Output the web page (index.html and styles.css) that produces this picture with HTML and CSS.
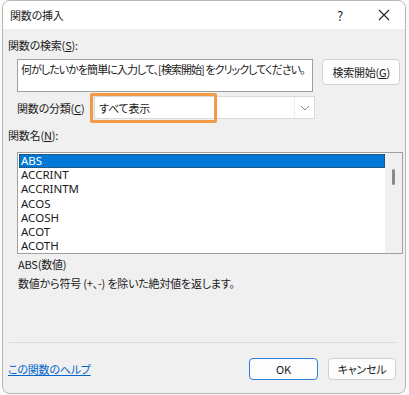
FILE: index.html
```html
<!DOCTYPE html>
<html lang="ja">
<head>
<meta charset="utf-8">
<link rel="stylesheet" href="styles.css">
</head>
<body>
<div class="window">
  <div class="titlebar">
    <span class="title">関数の挿入</span>
    <span class="help">?</span>
    <span class="close"><svg width="12" height="12" viewBox="0 0 12 12"><path d="M1 1L11 11M11 1L1 11" stroke="#222" stroke-width="1.1" fill="none"/></svg></span>
  </div>
  <div class="body">
    <div class="label">関数の検索(<u>S</u>):</div>
    <div class="search-row">
      <div class="search-box">何がしたいかを簡単に入力して、[検索開始] をクリックしてください。</div>
      <button class="btn search-btn">検索開始(<u>G</u>)</button>
    </div>
    <div class="cat-row">
      <span class="cat-label">関数の分類(<u>C</u>)</span>
      <div class="select">
        <span class="select-text">すべて表示</span>
        <span class="arrow"><svg width="10" height="6" viewBox="0 0 10 6"><path d="M1 1L5 5L9 1" stroke="#888" stroke-width="1" fill="none"/></svg></span>
        <div class="highlight"></div>
      </div>
    </div>
    <div class="label name-label">関数名(<u>N</u>):</div>
    <div class="listbox">
      <div class="items">
        <div class="item sel">ABS</div>
        <div class="item">ACCRINT</div>
        <div class="item">ACCRINTM</div>
        <div class="item">ACOS</div>
        <div class="item">ACOSH</div>
        <div class="item">ACOT</div>
        <div class="item">ACOTH</div>
      </div>
      <div class="scrollbar"><div class="thumb"></div></div>
    </div>
    <div class="syntax">ABS(数値)</div>
    <div class="desc">数値から符号 (+、-) を除いた絶対値を返します。</div>
    <div class="sep"></div>
    <div class="footer">
      <a class="helplink" href="#">この関数のヘルプ</a>
      <div class="buttons">
        <button class="btn ok">OK</button>
        <button class="btn cancel">キャンセル</button>
      </div>
    </div>
  </div>
</div>
</body>
</html>
```
FILE: styles.css
```css
* { box-sizing: border-box; }
html, body { margin: 0; padding: 0; background: #fafafa; }
body {
  font-family: "Noto Sans CJK JP", "Noto Sans", sans-serif;
  font-size: 11px;
  font-feature-settings: "palt";
  letter-spacing: -0.2px;
  color: #1a1a1a;
  width: 409px;
  height: 395px;
  overflow: hidden;
}
.window {
  margin: 0 3px 0 2px;
  height: 394px;
  border: 1px solid #b5b5b5;
  border-radius: 8px;
  overflow: hidden;
  background: #f0f0f0;
  display: flex;
  flex-direction: column;
}
.titlebar {
  height: 28px;
  background: #fff;
  display: flex;
  align-items: center;
  padding-left: 7px;
  flex-shrink: 0;
}
.title { flex: 1; font-size: 11px; color: #222; }
.help { width: 30px; text-align: center; font-size: 13px; margin-right: 14px; }
.close { width: 30px; display: flex; justify-content: center; margin-right: 6px; }
.body { padding: 7px 5px 0 5px; flex: 1; display: flex; flex-direction: column; }
.label { height: 18px; line-height: 18px; padding-left: 0; }
.search-row { display: flex; margin-top: 5px; padding-left: 9px; }
.search-box {
  width: 298px;
  height: 33px;
  background: #fff;
  border: 1px solid #a0a0a0;
  padding: 2px 3px;
  line-height: 15px;
  font-size: 11px;
  letter-spacing: -0.95px;
  white-space: nowrap;
  overflow: hidden;
}
.btn {
  font-family: inherit;
  font-size: 11px;
  font-feature-settings: "palt";
  letter-spacing: -0.2px;
  color: #1a1a1a;
  background: #fdfdfd;
  border: 1px solid #d0d0d0;
  border-radius: 4px;
  padding: 0;
}
.search-btn { margin-left: 9px; width: 78px; height: 26px; }
.cat-row { display: flex; align-items: center; margin-top: 3px; padding-left: 9px; height: 25px; }
.cat-label { width: 77px; }
.select {
  position: relative;
  width: 221px;
  height: 23px;
  background: #fff;
  border: 1px solid #d9d9d9;
  display: flex;
  align-items: center;
}
.select-text { flex: 1; padding-left: 4px; }
.arrow { width: 20px; height: 21px; display: flex; align-items: center; justify-content: center; border-left: 1px solid #eee; }
.highlight {
  position: absolute;
  left: -5px;
  top: -4px;
  width: 127px;
  height: 30px;
  border: 3px solid #f39a45;
  border-radius: 2px;
}
.name-label { margin-top: 6px; }
.listbox {
  margin: 8px 0 0 9px;
  width: 386px;
  height: 102px;
  background: #fff;
  border: 1px solid #a0a0a0;
  display: flex;
  overflow: hidden;
}
.items { flex: 1; padding: 1px 0 0 1px; }
.item { height: 14.2px; line-height: 14px; padding-left: 2px; font-size: 11.5px; letter-spacing: 0; font-family: "Noto Sans", "Noto Sans CJK JP", sans-serif; }
.item.sel { background: #0078d7; color: #fff; outline: 1px dotted #3a3a3a; outline-offset: -1px; }
.scrollbar { width: 17px; background: #f0f0f0; position: relative; }
.thumb { position: absolute; left: 7px; top: 16px; width: 3px; height: 16px; background: #8a8a8a; border-radius: 2px; }
.syntax { margin: 1px 0 0 10px; height: 18px; line-height: 18px; }
.desc { margin: 1px 0 0 10px; height: 18px; line-height: 18px; }
.sep { margin: 50px 3px 0 1px; height: 1px; background: #dcdcdc; }
.footer { display: flex; align-items: center; justify-content: space-between; margin-top: 15px; padding-left: 0; }
.helplink { color: #0066cc; text-decoration: underline; }
.buttons { display: flex; gap: 10px; padding-right: 4px; }
.ok { width: 69px; height: 22px; border: 1px solid #2f7fd6; border-radius: 4px; background: #fdfdfd; }
.cancel { width: 68px; height: 22px; }
```
